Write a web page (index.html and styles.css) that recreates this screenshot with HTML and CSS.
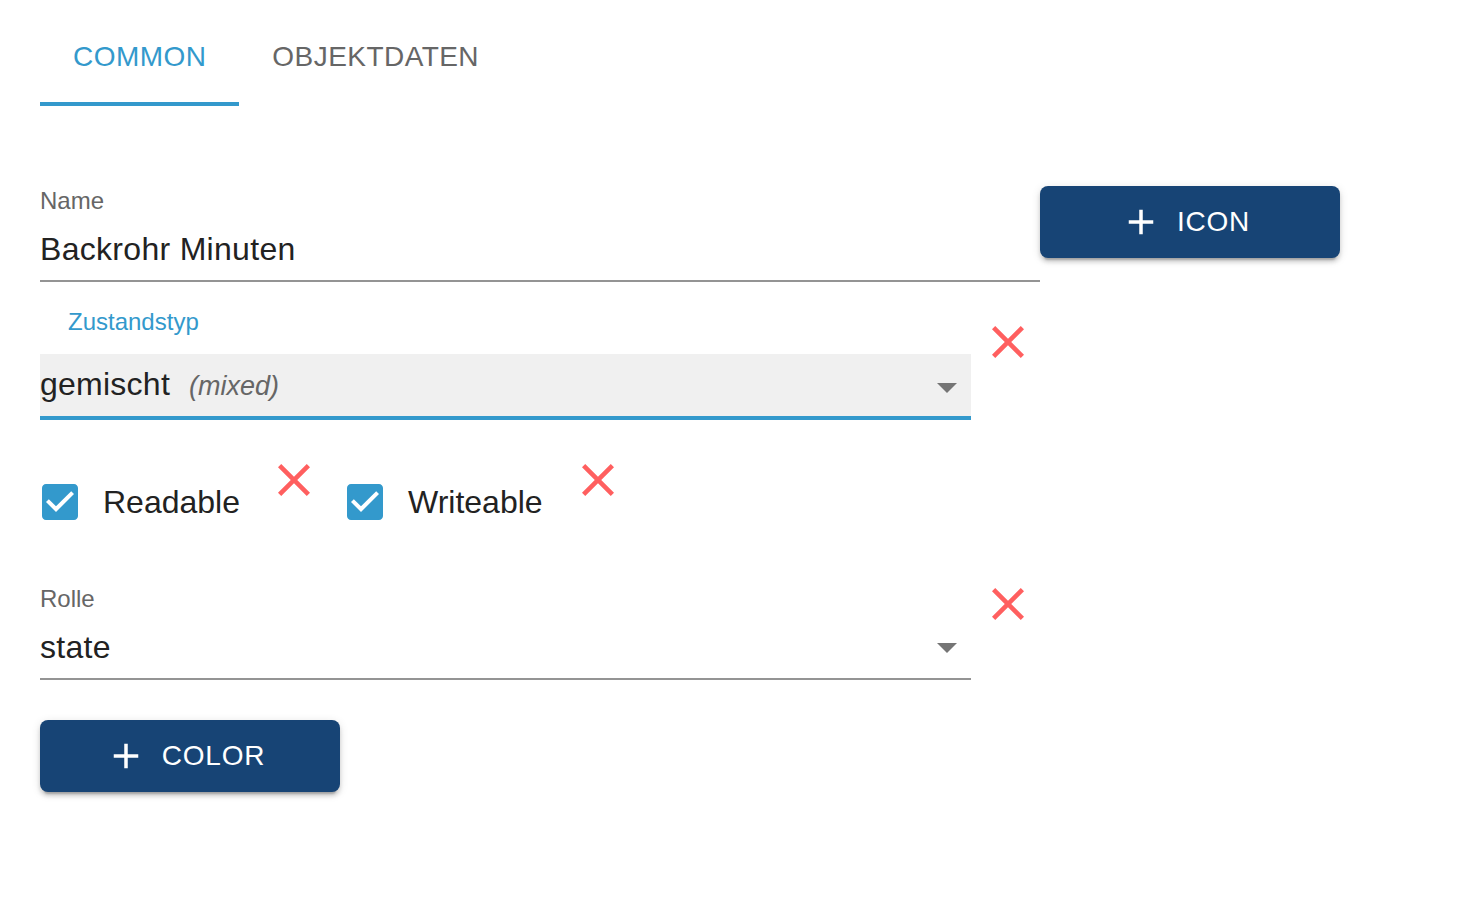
FILE: index.html
```html
<!DOCTYPE html>
<html lang="de">

<head>
    <meta charset="UTF-8">
    <title>Objekt bearbeiten</title>
    <link rel="stylesheet" href="styles.css">
</head>

<body>
    <div class="tabs">
        <div class="tab active">COMMON</div>
        <div class="tab">OBJEKTDATEN</div>
    </div>

    <div class="form">
        <div class="row">
            <div class="field field-name">
                <div class="label">Name</div>
                <div class="value">Backrohr Minuten</div>
            </div>
            <button class="btn btn-icon">
                <svg class="plus" viewBox="0 0 24 24"><path d="M19 13h-6v6h-2v-6H5v-2h6V5h2v6h6v2z"/></svg>
                <span>ICON</span>
            </button>
        </div>

        <div class="row row-type">
            <div class="field field-select">
                <div class="label label-focus">Zustandstyp</div>
                <div class="filled">
                    <span class="filled-text">gemischt<em>(mixed)</em></span>
                    <svg class="arrow" viewBox="0 0 24 24"><path d="M7 10l5 5 5-5z"/></svg>
                </div>
            </div>
            <svg class="remove remove-type" viewBox="5 5 14 14"><path d="M19 6.41L17.590 5 12 10.59 6.41 5 5 6.41 10.59 12 5 17.59 6.41 19 12 13.41 17.59 19 19 17.59 13.41 12z"/></svg>
        </div>

        <div class="row row-checks">
            <label class="check">
                <svg class="box" viewBox="0 0 24 24"><path d="M19 3H5c-1.11 0-2 .9-2 2v14c0 1.1.89 2 2 2h14c1.11 0 2-.9 2-2V5c0-1.1-.89-2-2-2zm-9 14l-5-5 1.41-1.41L10 14.17l7.59-7.59L19 8l-9 9z"/></svg>
                <span>Readable</span>
            </label>
            <svg class="remove remove-check" viewBox="5 5 14 14"><path d="M19 6.41L17.59 5 12 10.59 6.41 5 5 6.41 10.59 12 5 17.59 6.41 19 12 13.41 17.59 19 19 17.59 13.41 12z"/></svg>
            <label class="check check-second">
                <svg class="box" viewBox="0 0 24 24"><path d="M19 3H5c-1.11 0-2 .9-2 2v14c0 1.1.89 2 2 2h14c1.11 0 2-.9 2-2V5c0-1.1-.89-2-2-2zm-9 14l-5-5 1.41-1.41L10 14.17l7.59-7.59L19 8l-9 9z"/></svg>
                <span>Writeable</span>
            </label>
            <svg class="remove remove-check" viewBox="5 5 14 14"><path d="M19 6.41L17.59 5 12 10.59 6.41 5 5 6.41 10.59 12 5 17.59 6.41 19 12 13.41 17.59 19 19 17.59 13.41 12z"/></svg>
        </div>

        <div class="row row-role">
            <div class="field field-select">
                <div class="label">Rolle</div>
                <div class="value value-select">
                    <span>state</span>
                    <svg class="arrow" viewBox="0 0 24 24"><path d="M7 10l5 5 5-5z"/></svg>
                </div>
            </div>
            <svg class="remove remove-role" viewBox="5 5 14 14"><path d="M19 6.41L17.59 5 12 10.59 6.41 5 5 6.41 10.59 12 5 17.59 6.41 19 12 13.41 17.59 19 19 17.59 13.41 12z"/></svg>
        </div>

        <button class="btn btn-color">
            <svg class="plus" viewBox="0 0 24 24"><path d="M19 13h-6v6h-2v-6H5v-2h6V5h2v6h6v2z"/></svg>
            <span>COLOR</span>
        </button>
    </div>
</body>

</html>
```

FILE: styles.css
```css
* {
    margin: 0;
    padding: 0;
    box-sizing: border-box;
}

body {
    padding: 10px 40px;
    font-family: "Liberation Sans", Arial, sans-serif;
    color: #222;
    background: #fff;
}

/* tabs */
.tabs {
    display: flex;
}

.tab {
    height: 96px;
    padding: 2px 33px 0;
    display: flex;
    align-items: center;
    font-size: 28px;
    letter-spacing: 0.45px;
    color: #666;
    border-bottom: 4px solid transparent;
}

.tab.active {
    color: #3399cc;
    border-bottom-color: #3399cc;
}

/* form */
.form {
    margin-top: 79px;
}

.row {
    display: flex;
    align-items: flex-start;
}

.field-name {
    width: 1000px;
}

.field-select {
    width: 931px;
}

.label {
    font-size: 24px;
    line-height: 32px;
    color: #666;
}

.label-focus {
    padding-left: 28px;
    color: #3399cc;
}

.value {
    margin-top: 8px;
    padding-bottom: 7px;
    font-size: 32px;
    line-height: 48px;
    letter-spacing: 0.3px;
    color: #222;
    border-bottom: 2px solid #949494;
}

.value-select {
    display: flex;
    justify-content: space-between;
    align-items: center;
}

.filled {
    margin-top: 16px;
    height: 66px;
    display: flex;
    justify-content: space-between;
    align-items: center;
    background: #f0f0f0;
    border-bottom: 4px solid #3399cc;
}

.filled-text {
    font-size: 32px;
    line-height: 62px;
    letter-spacing: 0.25px;
    color: #222;
}

.filled-text em {
    margin-left: 19px;
    font-size: 27px;
    letter-spacing: 0;
    color: #666;
}

.filled .arrow {
    margin-top: 3px;
}

.arrow {
    width: 48px;
    height: 48px;
    fill: #757575;
}

.remove {
    width: 32px;
    height: 32px;
    fill: #ff5f5f;
    flex: none;
}

.row-type {
    margin-top: 24px;
}

.remove-type {
    margin: 20px 0 0 21px;
}

/* checkboxes */
.row-checks {
    margin-top: 44px;
}

.check {
    display: flex;
    align-items: center;
    margin: 14px 38px 0 -4px;
    font-size: 32px;
    line-height: 48px;
    color: #222;
}

.check-second {
    margin-left: 31px;
    margin-right: 39px;
}

.check .box {
    width: 48px;
    height: 48px;
    fill: #3399cc;
    margin-right: 19px;
}

.row-role {
    margin-top: 57px;
}

.remove-role {
    margin: 5px 0 0 21px;
}

/* buttons */
.btn {
    width: 300px;
    height: 72px;
    display: flex;
    align-items: center;
    justify-content: center;
    gap: 15px;
    border: none;
    border-radius: 8px;
    background: #174475;
    color: #fff;
    font-family: "Liberation Sans", Arial, sans-serif;
    font-size: 28px;
    letter-spacing: 0.8px;
    box-shadow: 0 6px 2px -4px rgba(0, 0, 0, 0.2), 0 4px 4px 0 rgba(0, 0, 0, 0.14), 0 2px 10px 0 rgba(0, 0, 0, 0.12);
    cursor: pointer;
}

.btn .plus {
    width: 42px;
    height: 42px;
    margin-left: -10px;
    fill: #fff;
}

.btn-icon {
    margin-top: 1px;
}

.btn-color {
    margin-top: 40px;
}
```
